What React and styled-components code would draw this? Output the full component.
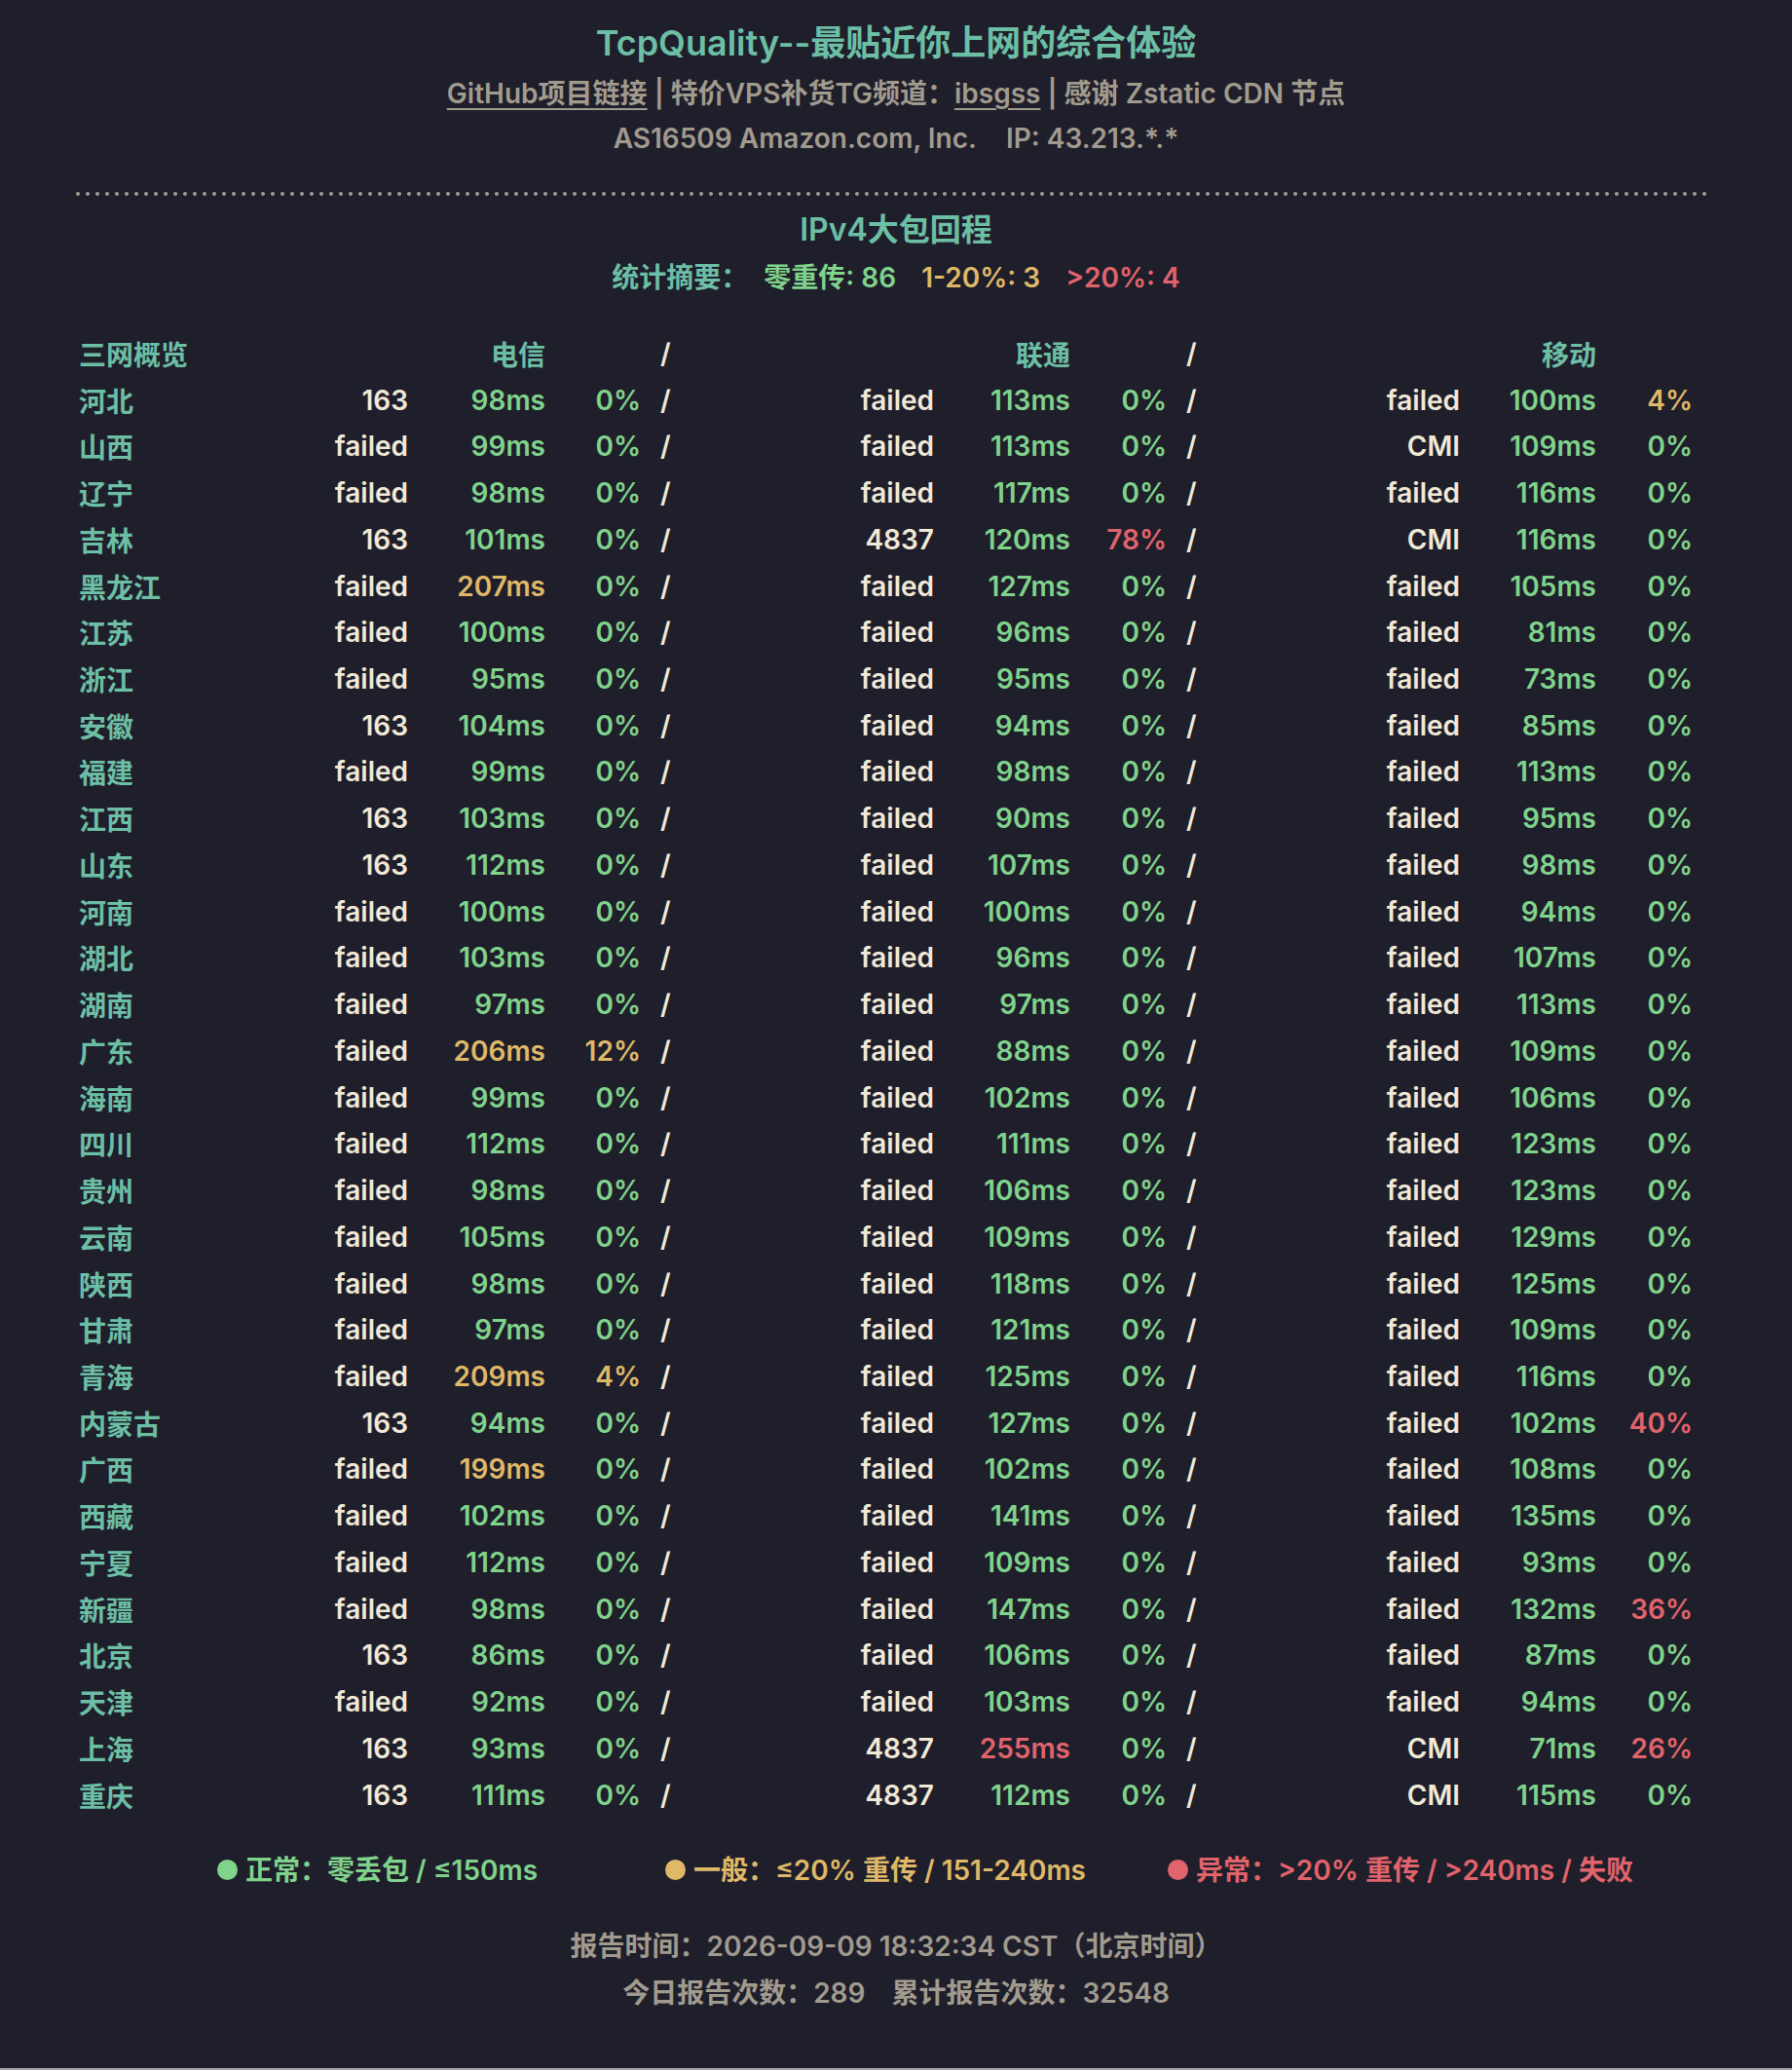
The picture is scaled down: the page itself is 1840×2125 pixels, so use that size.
import React from "react";
import styled, { createGlobalStyle } from "styled-components";

const C = {
  bg: "#1f1e2b",
  teal: "#6cbfa5",
  gray: "#a19b8e",
  cream: "#f1e9d6",
  green: "#80d38b",
  yellow: "#dfb968",
  red: "#e1646c",
  dots: "#9a958a",
};

const Global = createGlobalStyle`
  html { background: #a3a3a9; }
  body { margin: 0; }
  * { box-sizing: border-box; }
`;

const Page = styled.div`
  background: ${C.bg};
  height: 2123px;
  padding: 19px 76px 0;
  font-family: Inter, "Noto Sans CJK SC", sans-serif;
  font-weight: 600;
  color: ${C.cream};
`;

const Title = styled.h1`
  margin: 0;
  font-size: 36px;
  line-height: 50px;
  font-weight: 600;
  text-align: center;
  color: ${C.teal};
`;

const SubLine = styled.div`
  margin-top: ${(p) => p.$mt}px;
  font-size: 28px;
  line-height: 40px;
  text-align: center;
  color: ${C.gray};
`;

const Link = styled.a`
  color: inherit;
  text-decoration: underline;
  text-decoration-thickness: 2px;
  text-underline-offset: 5px;
`;

const Gap = styled.span`
  display: inline-block;
  width: ${(p) => p.$w}px;
`;

const Dotted = styled.div`
  margin: 35px 9px 0 0;
  height: 4px;
  background-image: radial-gradient(circle at center, ${C.dots} 1.6px, transparent 2.3px);
  background-size: 10px 4px;
  background-position: -1px 0;
`;

const SectionTitle = styled.h2`
  margin: 13px 0 0;
  font-size: 32px;
  line-height: 44px;
  font-weight: 600;
  text-align: center;
  color: ${C.teal};
`;

const Summary = styled.div`
  margin-top: 7px;
  font-size: 28px;
  line-height: 40px;
  text-align: center;
  color: ${C.teal};
`;

const Stat = styled.span`
  color: ${(p) => p.$c};
  margin-left: ${(p) => p.$ml}px;
`;

const COLS =
  "218px 120px 141px 98px 54px 247px 140px 99px 54px 247px 140px 99px";

const Table = styled.div`
  margin: 34px 0 0 5px;
  font-size: 28px;
`;

const Row = styled.div`
  display: grid;
  grid-template-columns: ${COLS};
  height: 47.74px;
  align-items: center;
`;

const Cell = styled.div`
  white-space: nowrap;
  text-align: ${(p) => p.$align || "right"};
  color: ${(p) => p.$c || C.cream};
`;

const SlashCell = styled.div`
  padding-left: 20px;
  color: ${C.cream};
`;

const Legend = styled.div`
  margin-top: 33px;
  display: grid;
  grid-template-columns: 460px 516px auto;
  padding-left: 147px;
  font-size: 28px;
  line-height: 40px;
`;

const LegendItem = styled.div`
  display: flex;
  align-items: center;
  gap: 8px;
  white-space: nowrap;
  color: ${(p) => p.$c};
`;

const Dot = styled.span`
  flex: none;
  width: 21px;
  height: 21px;
  border-radius: 50%;
  background: currentColor;
`;

const FooterLine = styled.div`
  margin-top: ${(p) => p.$mt}px;
  font-size: 28px;
  line-height: 40px;
  text-align: center;
  color: ${C.gray};
`;

const raw = `河北 163 98 0 failed 113 0 failed 100 4
山西 failed 99 0 failed 113 0 CMI 109 0
辽宁 failed 98 0 failed 117 0 failed 116 0
吉林 163 101 0 4837 120 78 CMI 116 0
黑龙江 failed 207 0 failed 127 0 failed 105 0
江苏 failed 100 0 failed 96 0 failed 81 0
浙江 failed 95 0 failed 95 0 failed 73 0
安徽 163 104 0 failed 94 0 failed 85 0
福建 failed 99 0 failed 98 0 failed 113 0
江西 163 103 0 failed 90 0 failed 95 0
山东 163 112 0 failed 107 0 failed 98 0
河南 failed 100 0 failed 100 0 failed 94 0
湖北 failed 103 0 failed 96 0 failed 107 0
湖南 failed 97 0 failed 97 0 failed 113 0
广东 failed 206 12 failed 88 0 failed 109 0
海南 failed 99 0 failed 102 0 failed 106 0
四川 failed 112 0 failed 111 0 failed 123 0
贵州 failed 98 0 failed 106 0 failed 123 0
云南 failed 105 0 failed 109 0 failed 129 0
陕西 failed 98 0 failed 118 0 failed 125 0
甘肃 failed 97 0 failed 121 0 failed 109 0
青海 failed 209 4 failed 125 0 failed 116 0
内蒙古 163 94 0 failed 127 0 failed 102 40
广西 failed 199 0 failed 102 0 failed 108 0
西藏 failed 102 0 failed 141 0 failed 135 0
宁夏 failed 112 0 failed 109 0 failed 93 0
新疆 failed 98 0 failed 147 0 failed 132 36
北京 163 86 0 failed 106 0 failed 87 0
天津 failed 92 0 failed 103 0 failed 94 0
上海 163 93 0 4837 255 0 CMI 71 26
重庆 163 111 0 4837 112 0 CMI 115 0`;

const rows = raw.split("\n").map((line) => {
  const p = line.trim().split(/\s+/);
  return {
    name: p[0],
    nets: [0, 1, 2].map((i) => ({
      isp: p[1 + i * 3],
      ms: Number(p[2 + i * 3]),
      loss: Number(p[3 + i * 3]),
    })),
  };
});

const msColor = (v) => (v <= 150 ? C.green : v <= 240 ? C.yellow : C.red);
const lossColor = (v) => (v === 0 ? C.green : v <= 20 ? C.yellow : C.red);

function DataRow({ row }) {
  const cells = [
    <Cell key="n" $align="left" $c={C.teal}>
      {row.name}
    </Cell>,
  ];
  row.nets.forEach((n, i) => {
    cells.push(<Cell key={`i${i}`}>{n.isp}</Cell>);
    cells.push(
      <Cell key={`m${i}`} $c={msColor(n.ms)}>
        {n.ms}ms
      </Cell>
    );
    cells.push(
      <Cell key={`l${i}`} $c={lossColor(n.loss)}>
        {n.loss}%
      </Cell>
    );
    if (i < 2) cells.push(<SlashCell key={`s${i}`}>/</SlashCell>);
  });
  return <Row>{cells}</Row>;
}

export default function App() {
  return (
    <>
      <Global />
      <Page>
        <Title>TcpQuality--最贴近你上网的综合体验</Title>
        <SubLine $mt={7}>
          <Link>GitHub项目链接</Link> | 特价VPS补货TG频道：<Link>ibsgss</Link> | 感谢 Zstatic CDN 节点
        </SubLine>
        <SubLine $mt={6}>
          AS16509 Amazon.com, Inc.
          <Gap $w={30} />
          IP: 43.213.*.*
        </SubLine>
        <Dotted />
        <SectionTitle>IPv4大包回程</SectionTitle>
        <Summary>
          统计摘要：
          <Stat $c={C.green} $ml={16}>零重传: 86</Stat>
          <Stat $c={C.yellow} $ml={26}>1-20%: 3</Stat>
          <Stat $c={C.red} $ml={26}>&gt;20%: 4</Stat>
        </Summary>
        <Table>
          <Row>
            <Cell $align="left" $c={C.teal}>三网概览</Cell>
            <Cell />
            <Cell $c={C.teal}>电信</Cell>
            <Cell />
            <SlashCell>/</SlashCell>
            <Cell />
            <Cell $c={C.teal}>联通</Cell>
            <Cell />
            <SlashCell>/</SlashCell>
            <Cell />
            <Cell $c={C.teal}>移动</Cell>
            <Cell />
          </Row>
          {rows.map((r) => (
            <DataRow key={r.name} row={r} />
          ))}
        </Table>
        <Legend>
          <LegendItem $c={C.green}>
            <Dot />
            正常：零丢包 / ≤150ms
          </LegendItem>
          <LegendItem $c={C.yellow}>
            <Dot />
            一般：≤20% 重传 / 151-240ms
          </LegendItem>
          <LegendItem $c={C.red}>
            <Dot />
            异常：&gt;20% 重传 / &gt;240ms / 失败
          </LegendItem>
        </Legend>
        <FooterLine $mt={38}>报告时间：2026-09-09 18:32:34 CST（北京时间）</FooterLine>
        <FooterLine $mt={8}>
          今日报告次数：289
          <Gap $w={27} />
          累计报告次数：32548
        </FooterLine>
      </Page>
    </>
  );
}
